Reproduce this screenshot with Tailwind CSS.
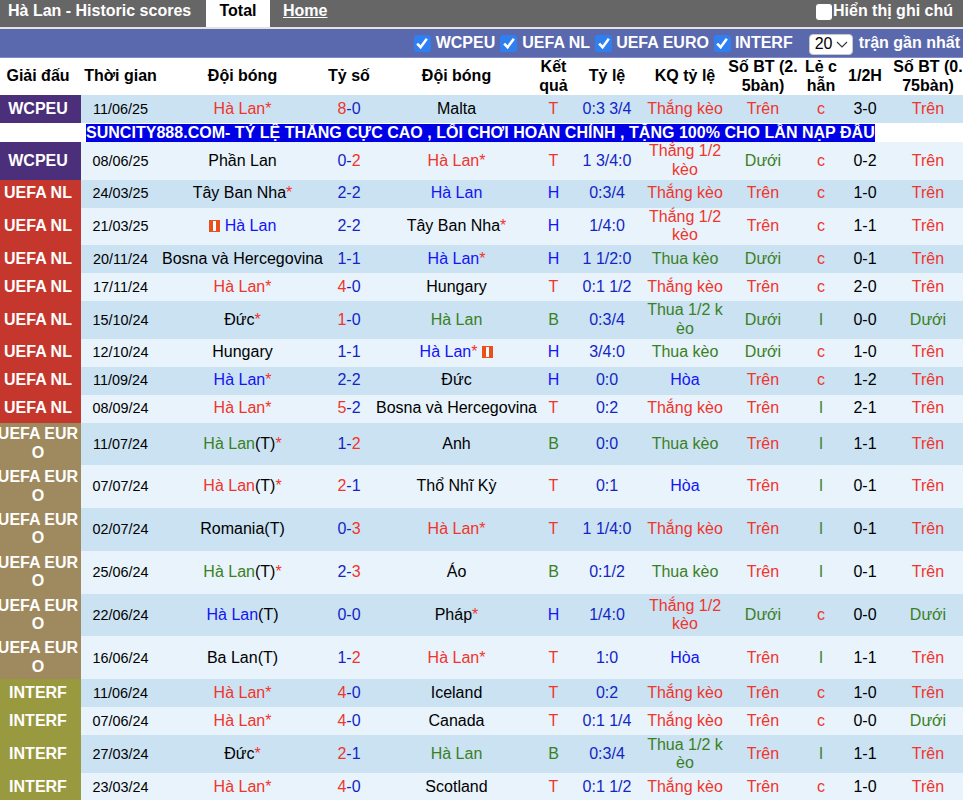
<!DOCTYPE html>
<html>
<head>
<meta charset="utf-8">
<title>Hà Lan - Historic scores</title>
<script src="https://cdn.jsdelivr.net/npm/@tailwindcss/browser@4"></script>
</head>
<body class="bg-white overflow-hidden [font-family:'Liberation_Sans',Arial,sans-serif] text-[16px] leading-[18.4px] text-black">
<div class="w-[963px] h-[800px] overflow-hidden">
  <div class="h-[27px] bg-[#666666] flex items-start text-white font-bold">
    <div class="w-[206px] pl-[8px] pt-[2px] h-[26px]">Hà Lan - Historic scores</div>
    <div class="w-[64px] h-[27px] bg-white text-black text-center pt-[2px]">Total</div>
    <a class="ml-[13px] pt-[2px] underline">Home</a>
    <div class="ml-auto flex items-start pt-[2px] pr-[10px]">
      <span class="w-[16px] h-[16px] mt-[2px] bg-white rounded-[3px] mr-px"></span>
      <span>Hiển thị ghi chú</span>
    </div>
  </div>
  <div class="h-[2px] bg-[#e3e3e3]"></div>
  <div class="h-[29px] bg-[#5a68ad] border-b border-[#7f8bc4] flex items-center justify-end text-white font-bold pr-[3px]">
    <span class="w-[17px] h-[17px] rounded-[3px] bg-[#2f7ff0] flex items-center justify-center mr-[5px]"><svg width="14" height="14" viewBox="0 0 13 13" fill="none" stroke="white" stroke-width="2.4"><path d="M2 7l3.2 3.4L11 2.6"/></svg></span>
    <span class="mr-[5px]">WCPEU</span>
    <span class="w-[17px] h-[17px] rounded-[3px] bg-[#2f7ff0] flex items-center justify-center mr-[5px]"><svg width="14" height="14" viewBox="0 0 13 13" fill="none" stroke="white" stroke-width="2.4"><path d="M2 7l3.2 3.4L11 2.6"/></svg></span>
    <span class="mr-[5px]">UEFA NL</span>
    <span class="w-[17px] h-[17px] rounded-[3px] bg-[#2f7ff0] flex items-center justify-center mr-[4px]"><svg width="14" height="14" viewBox="0 0 13 13" fill="none" stroke="white" stroke-width="2.4"><path d="M2 7l3.2 3.4L11 2.6"/></svg></span>
    <span class="mr-[5px]">UEFA EURO</span>
    <span class="w-[17px] h-[17px] rounded-[3px] bg-[#2f7ff0] flex items-center justify-center mr-[4px]"><svg width="14" height="14" viewBox="0 0 13 13" fill="none" stroke="white" stroke-width="2.4"><path d="M2 7l3.2 3.4L11 2.6"/></svg></span>
    <span class="mr-[16px]">INTERF</span>
    <span class="w-[44px] h-[21px] mt-[2px] bg-white border border-[#c9c9c9] rounded-[4px] text-black font-normal flex items-center pl-[5px] mr-[6px]">20<svg class="ml-[4px]" width="12" height="7" viewBox="0 0 12 7" fill="none" stroke="#333" stroke-width="1.1"><path d="M1 1l5 5 5-5"/></svg></span>
    <span>trận gần nhất</span>
  </div>
  <table class="table-fixed w-[963px] border-collapse text-center [&_td]:p-0 [&_th]:p-0 [&_td]:align-middle [&_th]:align-middle [&_td:nth-child(5)]:!pl-[2px] [&_th:nth-child(5)]:!pl-[2px]">
    <colgroup>
      <col class="w-[81px]"><col class="w-[79px]"><col class="w-[165px]"><col class="w-[48px]"><col class="w-[165px]"><col class="w-[31px]"><col class="w-[76px]"><col class="w-[80px]"><col class="w-[76px]"><col class="w-[40px]"><col class="w-[48px]"><col class="w-[74px]">
    </colgroup>
    <thead>
      <tr class="h-[37px] font-bold">
        <th><span class="block pr-[5px] whitespace-nowrap">Giải đấu</span></th><th class="whitespace-nowrap">Thời gian</th><th>Đội bóng</th><th>Tỷ số</th><th>Đội bóng</th><th>Kết<br>quả</th><th>Tỷ lệ</th><th>KQ tỷ lệ</th><th class="whitespace-nowrap">Số BT (2.<br>5bàn)</th><th class="whitespace-nowrap">Lẻ c<br>hẫn</th><th>1/2H</th><th class="whitespace-nowrap"><span class="block pl-[4px]">Số BT (0.<br>75bàn)</span></th>
      </tr>
    </thead>
    <tbody>
      <tr class="h-[28px] bg-[#cbe2f3]">
        <td class="bg-[#4b2f7a] text-white font-bold !pr-[5px]">WCPEU</td><td class="text-[14.4px]">11/06/25</td><td><span class="text-[#f0352b]">Hà Lan*</span></td><td><span class="text-[#f0352b]">8</span><span class="text-[#1326c4]">-0</span></td><td>Malta</td><td class="text-[#f0352b]">T</td><td class="text-[#1326c4]">0:3 3/4</td><td class="text-[#f0352b]">Thắng kèo</td><td class="text-[#f0352b]">Trên</td><td class="text-[#f0352b]">c</td><td>3-0</td><td class="text-[#f0352b] !pl-[4px]">Trên</td>
      </tr>
      <tr class="h-[19px] bg-white">
        <td colspan="12" class="!pl-[86px] text-left"><span class="block w-[789px] h-[18px] bg-[#0000e6] text-white font-bold whitespace-nowrap overflow-hidden tracking-[0.024px]">SUNCITY888.COM- TỶ LỆ THẮNG CỰC CAO , LỐI CHƠI HOÀN CHỈNH , TẶNG 100% CHO LẦN NẠP ĐẦU</span></td>
      </tr>
      <tr class="h-[37.5px] bg-[#e8f3fb]">
        <td class="bg-[#4b2f7a] text-white font-bold !pr-[5px]">WCPEU</td><td class="text-[14.4px]">08/06/25</td><td>Phần Lan</td><td><span class="text-[#1326c4]">0-</span><span class="text-[#f0352b]">2</span></td><td><span class="text-[#f0352b]">Hà Lan*</span></td><td class="text-[#f0352b]">T</td><td class="text-[#1326c4]">1 3/4:0</td><td class="text-[#f0352b]">Thắng 1/2<br>kèo</td><td class="text-[#3a8022]">Dưới</td><td class="text-[#f0352b]">c</td><td>0-2</td><td class="text-[#f0352b] !pl-[4px]">Trên</td>
      </tr>
      <tr class="h-[28px] bg-[#cbe2f3]">
        <td class="bg-[#c5372c] text-white font-bold !pr-[5px]">UEFA NL</td><td class="text-[14.4px]">24/03/25</td><td>Tây Ban Nha<span class="text-[#f0352b]">*</span></td><td class="text-[#1326c4]">2-2</td><td><span class="text-[#1414f5]">Hà Lan</span></td><td class="text-[#1414f5]">H</td><td class="text-[#1326c4]">0:3/4</td><td class="text-[#f0352b]">Thắng kèo</td><td class="text-[#f0352b]">Trên</td><td class="text-[#f0352b]">c</td><td>1-0</td><td class="text-[#f0352b] !pl-[4px]">Trên</td>
      </tr>
      <tr class="h-[37.5px] bg-[#e8f3fb]">
        <td class="bg-[#c5372c] text-white font-bold !pr-[5px]">UEFA NL</td><td class="text-[14.4px]">21/03/25</td><td><svg class="inline-block mr-[5px] align-[-1px]" width="11" height="12" viewBox="0 0 11 12"><rect width="11" height="12" fill="#e8501f"/><rect x="4" y="1" width="3" height="10" fill="#fff"/></svg><span class="text-[#1414f5]">Hà Lan</span></td><td class="text-[#1326c4]">2-2</td><td>Tây Ban Nha<span class="text-[#f0352b]">*</span></td><td class="text-[#1414f5]">H</td><td class="text-[#1326c4]">1/4:0</td><td class="text-[#f0352b]">Thắng 1/2<br>kèo</td><td class="text-[#f0352b]">Trên</td><td class="text-[#f0352b]">c</td><td>1-1</td><td class="text-[#f0352b] !pl-[4px]">Trên</td>
      </tr>
      <tr class="h-[28px] bg-[#cbe2f3]">
        <td class="bg-[#c5372c] text-white font-bold !pr-[5px]">UEFA NL</td><td class="text-[14.4px]">20/11/24</td><td class="whitespace-nowrap">Bosna và Hercegovina</td><td class="text-[#1326c4]">1-1</td><td><span class="text-[#1414f5]">Hà Lan</span><span class="text-[#f0352b]">*</span></td><td class="text-[#1414f5]">H</td><td class="text-[#1326c4]">1 1/2:0</td><td class="text-[#3a8022]">Thua kèo</td><td class="text-[#3a8022]">Dưới</td><td class="text-[#f0352b]">c</td><td>0-1</td><td class="text-[#f0352b] !pl-[4px]">Trên</td>
      </tr>
      <tr class="h-[28px] bg-[#e8f3fb]">
        <td class="bg-[#c5372c] text-white font-bold !pr-[5px]">UEFA NL</td><td class="text-[14.4px]">17/11/24</td><td><span class="text-[#f0352b]">Hà Lan*</span></td><td><span class="text-[#f0352b]">4</span><span class="text-[#1326c4]">-0</span></td><td>Hungary</td><td class="text-[#f0352b]">T</td><td class="text-[#1326c4]">0:1 1/2</td><td class="text-[#f0352b]">Thắng kèo</td><td class="text-[#f0352b]">Trên</td><td class="text-[#f0352b]">c</td><td>2-0</td><td class="text-[#f0352b] !pl-[4px]">Trên</td>
      </tr>
      <tr class="h-[37.5px] bg-[#cbe2f3]">
        <td class="bg-[#c5372c] text-white font-bold !pr-[5px]">UEFA NL</td><td class="text-[14.4px]">15/10/24</td><td>Đức<span class="text-[#f0352b]">*</span></td><td><span class="text-[#f0352b]">1</span><span class="text-[#1326c4]">-0</span></td><td><span class="text-[#3a8022]">Hà Lan</span></td><td class="text-[#3a8022]">B</td><td class="text-[#1326c4]">0:3/4</td><td class="text-[#3a8022]">Thua 1/2 k<br>èo</td><td class="text-[#3a8022]">Dưới</td><td class="text-[#3a8022]">l</td><td>0-0</td><td class="text-[#3a8022] !pl-[4px]">Dưới</td>
      </tr>
      <tr class="h-[28px] bg-[#e8f3fb]">
        <td class="bg-[#c5372c] text-white font-bold !pr-[5px]">UEFA NL</td><td class="text-[14.4px]">12/10/24</td><td>Hungary</td><td class="text-[#1326c4]">1-1</td><td><span class="text-[#1414f5]">Hà Lan</span><span class="text-[#f0352b]">*</span><svg class="inline-block ml-[5px] align-[-1px]" width="11" height="12" viewBox="0 0 11 12"><rect width="11" height="12" fill="#e8501f"/><rect x="4" y="1" width="3" height="10" fill="#fff"/></svg></td><td class="text-[#1414f5]">H</td><td class="text-[#1326c4]">3/4:0</td><td class="text-[#3a8022]">Thua kèo</td><td class="text-[#3a8022]">Dưới</td><td class="text-[#f0352b]">c</td><td>1-0</td><td class="text-[#f0352b] !pl-[4px]">Trên</td>
      </tr>
      <tr class="h-[28px] bg-[#cbe2f3]">
        <td class="bg-[#c5372c] text-white font-bold !pr-[5px]">UEFA NL</td><td class="text-[14.4px]">11/09/24</td><td><span class="text-[#1414f5]">Hà Lan</span><span class="text-[#f0352b]">*</span></td><td class="text-[#1326c4]">2-2</td><td>Đức</td><td class="text-[#1414f5]">H</td><td class="text-[#1326c4]">0:0</td><td class="text-[#1414f5]">Hòa</td><td class="text-[#f0352b]">Trên</td><td class="text-[#f0352b]">c</td><td>1-2</td><td class="text-[#f0352b] !pl-[4px]">Trên</td>
      </tr>
      <tr class="h-[28px] bg-[#e8f3fb]">
        <td class="bg-[#c5372c] text-white font-bold !pr-[5px]">UEFA NL</td><td class="text-[14.4px]">08/09/24</td><td><span class="text-[#f0352b]">Hà Lan*</span></td><td><span class="text-[#f0352b]">5</span><span class="text-[#1326c4]">-2</span></td><td class="whitespace-nowrap">Bosna và Hercegovina</td><td class="text-[#f0352b]">T</td><td class="text-[#1326c4]">0:2</td><td class="text-[#f0352b]">Thắng kèo</td><td class="text-[#f0352b]">Trên</td><td class="text-[#3a8022]">l</td><td>2-1</td><td class="text-[#f0352b] !pl-[4px]">Trên</td>
      </tr>
      <tr class="h-[42.8px] bg-[#cbe2f3]">
        <td class="bg-[#9f8a60] text-white font-bold !pr-[5px]"><span class="block -mx-[8px] whitespace-nowrap">UEFA EUR<br>O</span></td><td class="text-[14.4px]">11/07/24</td><td><span class="text-[#3a8022]">Hà Lan</span>(T)<span class="text-[#f0352b]">*</span></td><td><span class="text-[#1326c4]">1-</span><span class="text-[#f0352b]">2</span></td><td>Anh</td><td class="text-[#3a8022]">B</td><td class="text-[#1326c4]">0:0</td><td class="text-[#3a8022]">Thua kèo</td><td class="text-[#f0352b]">Trên</td><td class="text-[#3a8022]">l</td><td>1-1</td><td class="text-[#f0352b] !pl-[4px]">Trên</td>
      </tr>
      <tr class="h-[42.8px] bg-[#e8f3fb]">
        <td class="bg-[#9f8a60] text-white font-bold !pr-[5px]"><span class="block -mx-[8px] whitespace-nowrap">UEFA EUR<br>O</span></td><td class="text-[14.4px]">07/07/24</td><td><span class="text-[#f0352b]">Hà Lan</span>(T)<span class="text-[#f0352b]">*</span></td><td><span class="text-[#f0352b]">2</span><span class="text-[#1326c4]">-1</span></td><td>Thổ Nhĩ Kỳ</td><td class="text-[#f0352b]">T</td><td class="text-[#1326c4]">0:1</td><td class="text-[#1414f5]">Hòa</td><td class="text-[#f0352b]">Trên</td><td class="text-[#3a8022]">l</td><td>0-1</td><td class="text-[#f0352b] !pl-[4px]">Trên</td>
      </tr>
      <tr class="h-[42.8px] bg-[#cbe2f3]">
        <td class="bg-[#9f8a60] text-white font-bold !pr-[5px]"><span class="block -mx-[8px] whitespace-nowrap">UEFA EUR<br>O</span></td><td class="text-[14.4px]">02/07/24</td><td>Romania(T)</td><td><span class="text-[#1326c4]">0-</span><span class="text-[#f0352b]">3</span></td><td><span class="text-[#f0352b]">Hà Lan*</span></td><td class="text-[#f0352b]">T</td><td class="text-[#1326c4]">1 1/4:0</td><td class="text-[#f0352b]">Thắng kèo</td><td class="text-[#f0352b]">Trên</td><td class="text-[#3a8022]">l</td><td>0-1</td><td class="text-[#f0352b] !pl-[4px]">Trên</td>
      </tr>
      <tr class="h-[42.8px] bg-[#e8f3fb]">
        <td class="bg-[#9f8a60] text-white font-bold !pr-[5px]"><span class="block -mx-[8px] whitespace-nowrap">UEFA EUR<br>O</span></td><td class="text-[14.4px]">25/06/24</td><td><span class="text-[#3a8022]">Hà Lan</span>(T)<span class="text-[#f0352b]">*</span></td><td><span class="text-[#1326c4]">2-</span><span class="text-[#f0352b]">3</span></td><td>Áo</td><td class="text-[#3a8022]">B</td><td class="text-[#1326c4]">0:1/2</td><td class="text-[#3a8022]">Thua kèo</td><td class="text-[#f0352b]">Trên</td><td class="text-[#3a8022]">l</td><td>0-1</td><td class="text-[#f0352b] !pl-[4px]">Trên</td>
      </tr>
      <tr class="h-[42.8px] bg-[#cbe2f3]">
        <td class="bg-[#9f8a60] text-white font-bold !pr-[5px]"><span class="block -mx-[8px] whitespace-nowrap">UEFA EUR<br>O</span></td><td class="text-[14.4px]">22/06/24</td><td><span class="text-[#1414f5]">Hà Lan</span>(T)</td><td class="text-[#1326c4]">0-0</td><td>Pháp<span class="text-[#f0352b]">*</span></td><td class="text-[#1414f5]">H</td><td class="text-[#1326c4]">1/4:0</td><td class="text-[#f0352b]">Thắng 1/2<br>kèo</td><td class="text-[#3a8022]">Dưới</td><td class="text-[#f0352b]">c</td><td>0-0</td><td class="text-[#3a8022] !pl-[4px]">Dưới</td>
      </tr>
      <tr class="h-[42.8px] bg-[#e8f3fb]">
        <td class="bg-[#9f8a60] text-white font-bold !pr-[5px]"><span class="block -mx-[8px] whitespace-nowrap">UEFA EUR<br>O</span></td><td class="text-[14.4px]">16/06/24</td><td>Ba Lan(T)</td><td><span class="text-[#1326c4]">1-</span><span class="text-[#f0352b]">2</span></td><td><span class="text-[#f0352b]">Hà Lan*</span></td><td class="text-[#f0352b]">T</td><td class="text-[#1326c4]">1:0</td><td class="text-[#1414f5]">Hòa</td><td class="text-[#f0352b]">Trên</td><td class="text-[#3a8022]">l</td><td>1-1</td><td class="text-[#f0352b] !pl-[4px]">Trên</td>
      </tr>
      <tr class="h-[28px] bg-[#cbe2f3]">
        <td class="bg-[#99993f] text-white font-bold !pr-[5px]">INTERF</td><td class="text-[14.4px]">11/06/24</td><td><span class="text-[#f0352b]">Hà Lan*</span></td><td><span class="text-[#f0352b]">4</span><span class="text-[#1326c4]">-0</span></td><td>Iceland</td><td class="text-[#f0352b]">T</td><td class="text-[#1326c4]">0:2</td><td class="text-[#f0352b]">Thắng kèo</td><td class="text-[#f0352b]">Trên</td><td class="text-[#f0352b]">c</td><td>1-0</td><td class="text-[#f0352b] !pl-[4px]">Trên</td>
      </tr>
      <tr class="h-[28px] bg-[#e8f3fb]">
        <td class="bg-[#99993f] text-white font-bold !pr-[5px]">INTERF</td><td class="text-[14.4px]">07/06/24</td><td><span class="text-[#f0352b]">Hà Lan*</span></td><td><span class="text-[#f0352b]">4</span><span class="text-[#1326c4]">-0</span></td><td>Canada</td><td class="text-[#f0352b]">T</td><td class="text-[#1326c4]">0:1 1/4</td><td class="text-[#f0352b]">Thắng kèo</td><td class="text-[#f0352b]">Trên</td><td class="text-[#f0352b]">c</td><td>0-0</td><td class="text-[#3a8022] !pl-[4px]">Dưới</td>
      </tr>
      <tr class="h-[37.5px] bg-[#cbe2f3]">
        <td class="bg-[#99993f] text-white font-bold !pr-[5px]">INTERF</td><td class="text-[14.4px]">27/03/24</td><td>Đức<span class="text-[#f0352b]">*</span></td><td><span class="text-[#f0352b]">2</span><span class="text-[#1326c4]">-1</span></td><td><span class="text-[#3a8022]">Hà Lan</span></td><td class="text-[#3a8022]">B</td><td class="text-[#1326c4]">0:3/4</td><td class="text-[#3a8022]">Thua 1/2 k<br>èo</td><td class="text-[#f0352b]">Trên</td><td class="text-[#3a8022]">l</td><td>1-1</td><td class="text-[#f0352b] !pl-[4px]">Trên</td>
      </tr>
      <tr class="h-[28px] bg-[#e8f3fb]">
        <td class="bg-[#99993f] text-white font-bold !pr-[5px]">INTERF</td><td class="text-[14.4px]">23/03/24</td><td><span class="text-[#f0352b]">Hà Lan*</span></td><td><span class="text-[#f0352b]">4</span><span class="text-[#1326c4]">-0</span></td><td>Scotland</td><td class="text-[#f0352b]">T</td><td class="text-[#1326c4]">0:1 1/2</td><td class="text-[#f0352b]">Thắng kèo</td><td class="text-[#f0352b]">Trên</td><td class="text-[#f0352b]">c</td><td>1-0</td><td class="text-[#f0352b] !pl-[4px]">Trên</td>
      </tr>
    </tbody>
  </table>
</div>
</body>
</html>
